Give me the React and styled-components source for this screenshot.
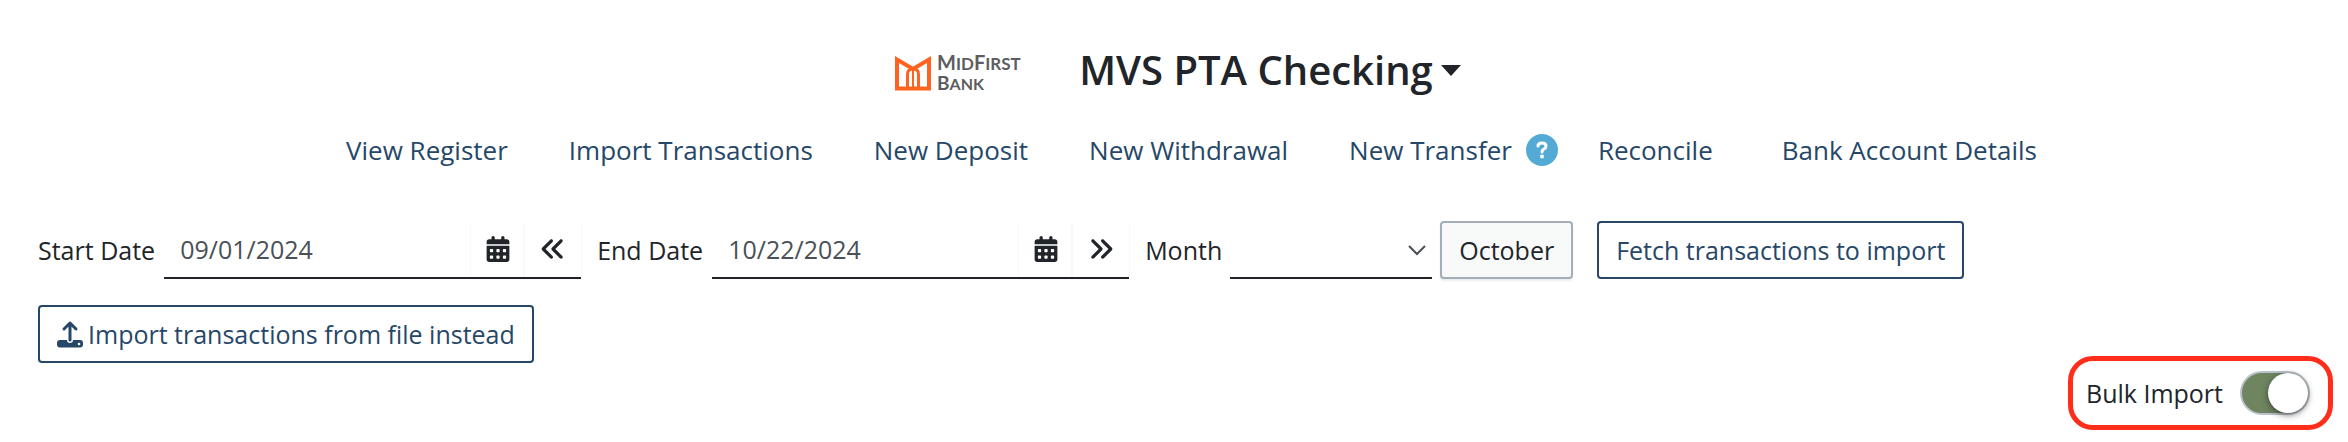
import React, { useState } from 'react';
import styled, { createGlobalStyle } from 'styled-components';
import { FaCalendarDays, FaAnglesLeft, FaAnglesRight } from 'react-icons/fa6';

const color = {
  text: '#212529',
  navy: '#264768',
  field: '#495057',
  border: '#a3aeb8',
  light: '#f8faf9',
  info: '#53abd5',
  green: '#6e8560',
  highlight: '#ff2d1a',
  logo: '#ff6320',
  logoText: '#5c5d60',
};

const GlobalStyle = createGlobalStyle`
  * {
    box-sizing: border-box;
  }

  body {
    margin: 0;
    background: #ffffff;
    color: ${color.text};
    font-family: 'Open Sans', sans-serif;
    font-size: 25px;
    line-height: 40px;
  }

  button, input, select {
    font: inherit;
    color: inherit;
  }
`;

const Page = styled.main`
  padding: 38px 30px 27px 38px;
`;

const Header = styled.header`
  display: flex;
  align-items: center;
  justify-content: center;
  gap: 56px;
  height: 64px;
`;

const Logo = styled.svg`
  width: 128px;
  height: 40px;
  margin-top: 8px;
  overflow: visible;
`;

const AccountButton = styled.button`
  display: flex;
  align-items: center;
  gap: 8px;
  padding: 0;
  border: none;
  background: none;
  cursor: pointer;
`;

const Title = styled.h1`
  margin: 0;
  font-size: 40px;
  font-weight: 600;
  line-height: 60px;
`;

const Caret = styled.span`
  border-top: 11px solid ${color.text};
  border-left: 10px solid transparent;
  border-right: 10px solid transparent;
`;

const Nav = styled.nav`
  display: flex;
  align-items: center;
  justify-content: center;
  gap: 61px;
  height: 64px;
  margin-top: 16px;
  padding-left: 27px;
  font-size: 26px;
  white-space: nowrap;
`;

const NavItem = styled.div`
  display: flex;
  align-items: center;
  gap: 14px;
  margin: ${({ $margin }) => $margin || 0};
`;

const NavLink = styled.a`
  color: ${color.navy};
  text-decoration: none;
`;

const HelpButton = styled.button`
  display: grid;
  place-items: center;
  width: 32px;
  height: 32px;
  padding: 0;
  border: none;
  border-radius: 50%;
  background: ${color.info};
  cursor: pointer;
`;

const Toolbar = styled.form`
  display: flex;
  flex-wrap: wrap;
  align-items: center;
  gap: 26px 24px;
  margin-top: 39px;
`;

const Filters = styled.div`
  display: flex;
  align-items: center;
  gap: 8px;
`;

const Field = styled.div`
  display: flex;
  align-items: center;
  gap: 9px;
  margin-right: 8px;
`;

const InputGroup = styled.div`
  display: flex;
  width: 417px;
  height: 58px;
  border-bottom: 2px solid ${color.text};
`;

const DateInput = styled.input`
  flex: 1;
  min-width: 0;
  padding: 0 16px;
  border: none;
  outline: none;
  background: none;
  color: ${color.field};
`;

const IconButton = styled.button`
  display: grid;
  place-items: center;
  width: ${({ $width }) => $width};
  padding: 0;
  border: none;
  background: none;
  box-shadow: 0 2px 2px rgba(0, 0, 0, 0.08);
  cursor: pointer;
`;

const SelectWrap = styled.div`
  position: relative;
  width: 202px;
`;

const Select = styled.select`
  display: block;
  width: 100%;
  height: 58px;
  padding: 0 40px 0 16px;
  border: none;
  border-bottom: 2px solid ${color.text};
  border-radius: 0;
  outline: none;
  background: none;
  appearance: none;
`;

const SelectArrow = styled.svg`
  position: absolute;
  top: 24px;
  right: 6px;
  width: 18px;
  height: 11px;
  pointer-events: none;
`;

const Button = styled.button`
  display: flex;
  align-items: center;
  gap: 5px;
  height: 58px;
  padding: 0 17px;
  border: 2px solid ${({ $light }) => ($light ? color.border : color.navy)};
  border-radius: 4px;
  background: ${({ $light }) => ($light ? color.light : '#ffffff')};
  color: ${({ $light }) => ($light ? color.text : color.navy)};
  box-shadow: ${({ $light }) => ($light ? '0 2px 2px rgba(0, 0, 0, 0.08)' : 'none')};
  cursor: pointer;
`;

const BulkRow = styled.div`
  display: flex;
  justify-content: flex-end;
  margin-top: 8px;
`;

const BulkLabel = styled.label`
  display: flex;
  align-items: center;
  gap: 17px;
  height: 44px;
  padding: 0 8px 0 3px;
  border-radius: 10px;
  outline: 5px solid ${color.highlight};
  outline-offset: 10px;
  cursor: pointer;
`;

const Switch = styled.input`
  display: flex;
  align-items: center;
  width: 70px;
  height: 44px;
  margin: 0;
  border: 2px solid #b9c1c9;
  border-radius: 22px;
  background: #ffffff;
  appearance: none;
  cursor: pointer;

  &::before {
    content: '';
    width: 40px;
    height: 40px;
    border-radius: 50%;
    background: #ffffff;
    box-shadow: 0 2px 6px rgba(0, 0, 0, 0.5);
  }

  &:checked {
    justify-content: flex-end;
    background: ${color.green};
  }
`;

const links = [
  { name: 'View Register' },
  { name: 'Import Transactions' },
  { name: 'New Deposit' },
  { name: 'New Withdrawal' },
  { name: 'New Transfer', help: true },
  { name: 'Reconcile', margin: '0 8px 0 -21px' },
  { name: 'Bank Account Details' },
];

const BankLogo = () => (
  <Logo viewBox="0 0 128 40" role="img" aria-label="MidFirst Bank">
    <g fill="none" stroke={color.logo} strokeWidth="4">
      <path d="M2 34.500V5.500L18 15 34 5.500V34.500Z" />
      <path d="M12.500 34V20q0-5 5.500-5t5.500 5V34" strokeWidth="3" />
      <path d="M18 15V34" strokeWidth="2" />
    </g>
    <g fill={color.logoText} fontFamily="Lato, sans-serif" fontWeight="700">
      <text x="42" y="16" fontSize="20">M<tspan fontSize="17">ID</tspan>F<tspan fontSize="17">IRST</tspan></text>
      <text x="42" y="36" fontSize="19">B<tspan fontSize="16">ANK</tspan></text>
    </g>
  </Logo>
);

const UploadIcon = () => (
  <svg width="26" height="28" viewBox="0 0 26 28" aria-hidden="true">
    <path d="M13 20V3M7 9l6-6 6 6" fill="none" stroke="currentColor" strokeWidth="3" strokeLinecap="round" strokeLinejoin="round" />
    <path d="M3 20h7a3 3 0 0 0 6 0h7a3 3 0 0 1 3 3v1.500a3 3 0 0 1-3 3H3a3 3 0 0 1-3-3V23a3 3 0 0 1 3-3Z" fill="currentColor" />
    <circle cx="22" cy="24" r="1.300" fill="#ffffff" />
  </svg>
);

const DateField = ({ id, label, initial, action, children }) => {
  const [value, setValue] = useState(initial);

  return (
    <Field>
      <label htmlFor={id}>{label}</label>
      <InputGroup>
        <DateInput id={id} value={value} onChange={(e) => setValue(e.target.value)} />
        <IconButton type="button" $width="53px" aria-label={`Choose ${label}`}>
          <FaCalendarDays size={26} />
        </IconButton>
        <IconButton type="button" $width="57px" aria-label={action}>
          {children}
        </IconButton>
      </InputGroup>
    </Field>
  );
};

const App = () => {
  const [bulk, setBulk] = useState(true);

  return (
    <>
      <GlobalStyle />
      <Page>
        <Header>
          <BankLogo />
          <AccountButton type="button">
            <Title>MVS PTA Checking</Title>
            <Caret />
          </AccountButton>
        </Header>
        <Nav>
          {links.map((link) => (
            <NavItem key={link.name} $margin={link.margin}>
              <NavLink href="#">{link.name}</NavLink>
              {link.help && (
                <HelpButton type="button" aria-label="Help">
                  <svg width="12" height="18" viewBox="0 0 12 18" aria-hidden="true">
                    <path d="M2 5q0-3 4-3t4 3q0 2-2 3t-2 3" fill="none" stroke="#ffffff" strokeWidth="3" strokeLinecap="round" />
                    <circle cx="6" cy="15.500" r="2" fill="#ffffff" />
                  </svg>
                </HelpButton>
              )}
            </NavItem>
          ))}
        </Nav>
        <Toolbar onSubmit={(e) => e.preventDefault()}>
          <Filters>
            <DateField id="start-date" label="Start Date" initial="09/01/2024" action="Previous month">
              <FaAnglesLeft size={26} />
            </DateField>
            <DateField id="end-date" label="End Date" initial="10/22/2024" action="Next month">
              <FaAnglesRight size={26} />
            </DateField>
            <label htmlFor="month">Month</label>
            <SelectWrap>
              <Select id="month" defaultValue="">
                <option value="" />
                <option value="9">September</option>
                <option value="10">October</option>
              </Select>
              <SelectArrow viewBox="0 0 18 11" aria-hidden="true">
                <path d="M1 1l8 8 8-8" fill="none" stroke={color.field} strokeWidth="2" />
              </SelectArrow>
            </SelectWrap>
            <Button type="button" $light>October</Button>
          </Filters>
          <Button type="submit">Fetch transactions to import</Button>
          <Button type="button">
            <UploadIcon />
            Import transactions from file instead
          </Button>
        </Toolbar>
        <BulkRow>
          <BulkLabel>
            Bulk Import
            <Switch type="checkbox" role="switch" checked={bulk} onChange={(e) => setBulk(e.target.checked)} />
          </BulkLabel>
        </BulkRow>
      </Page>
    </>
  );
};

export default App;
